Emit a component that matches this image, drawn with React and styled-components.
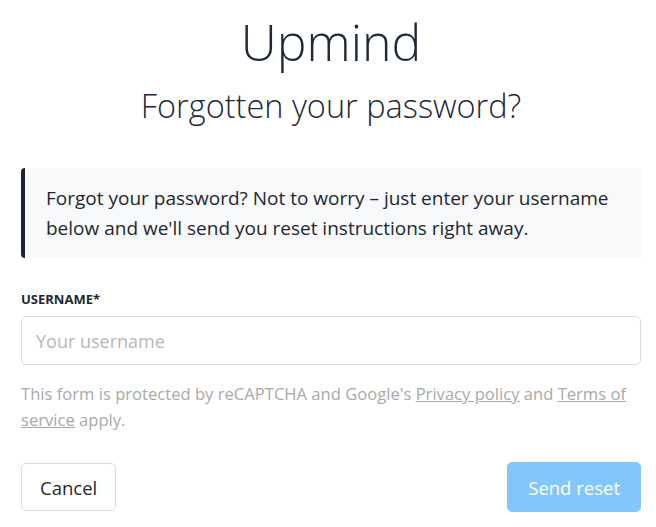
import React from "react";
import styled, { createGlobalStyle } from "styled-components";

const GlobalStyle = createGlobalStyle`
    body {
        margin: 0;
        background: #fff;
        font-family: "Open Sans", "Noto Sans", sans-serif;
        color: #1f2731;
    }
`;

const Page = styled.div`
    width: 620px;
    padding: 14px 15px 0 21px;
`;

const Brand = styled.h1`
    margin: 0;
    text-align: center;
    font-size: 50px;
    font-weight: 300;
    line-height: 56px;
    color: #1f2937;
`;

const Heading = styled.h2`
    margin: 16px 0 0;
    text-align: center;
    font-size: 32.5px;
    font-weight: 300;
    line-height: 40px;
    color: #1f2937;
`;

const Callout = styled.div`
    margin-top: 42px;
    background: #f8f9fa;
    border-left: 4px solid #1d2530;
    border-radius: 4px;
    padding: 15px 20px 15px 21px;
    font-size: 19px;
    line-height: 30px;
    color: #1f2731;
`;

const Label = styled.label`
    display: block;
    margin-top: 32px;
    font-size: 13px;
    font-weight: 700;
    color: #1f2731;
    line-height: 18px;
`;

const Input = styled.input`
    display: block;
    box-sizing: border-box;
    width: 100%;
    height: 49px;
    margin-top: 8px;
    padding: 0 14px;
    border: 1px solid #dcdcdc;
    border-radius: 5px;
    font-family: inherit;
    font-size: 18px;
    color: #1f2731;
    &::placeholder {
        color: #b8b8b8;
    }
`;

const Notice = styled.p`
    margin: 16px 0 0;
    font-size: 16.6px;
    line-height: 26px;
    color: #a9a9a9;
    a {
        color: #a9a9a9;
        text-decoration: underline;
    }
`;

const Actions = styled.div`
    display: flex;
    justify-content: space-between;
    align-items: center;
    margin-top: 29px;
`;

const Button = styled.button`
    box-sizing: border-box;
    font-family: inherit;
    font-size: 18.5px;
    border-radius: 5px;
    cursor: pointer;
    padding: 0 ${(p) => (p.$primary ? "20px" : "18px")};
    height: ${(p) => (p.$primary ? "50px" : "48px")};
    border: 1px solid ${(p) => (p.$primary ? "#82c6fc" : "#dcdcdc")};
    background: ${(p) => (p.$primary ? "#82c6fc" : "#fff")};
    color: ${(p) => (p.$primary ? "#fff" : "#1f2731")};
`;

const App = () => {
    return (
        <Page>
            <GlobalStyle />
            <Brand>Upmind</Brand>
            <Heading>Forgotten your password?</Heading>
            <Callout>
                Forgot your password? Not to worry – just enter your username
                below and we'll send you reset instructions right away.
            </Callout>
            <Label htmlFor="username">USERNAME*</Label>
            <Input id="username" placeholder="Your username" />
            <Notice>
                This form is protected by reCAPTCHA and Google's{" "}
                <a href="#">Privacy policy</a> and <a href="#">Terms of service</a>{" "}
                apply.
            </Notice>
            <Actions>
                <Button>Cancel</Button>
                <Button $primary>Send reset</Button>
            </Actions>
        </Page>
    );
};

export default App;
